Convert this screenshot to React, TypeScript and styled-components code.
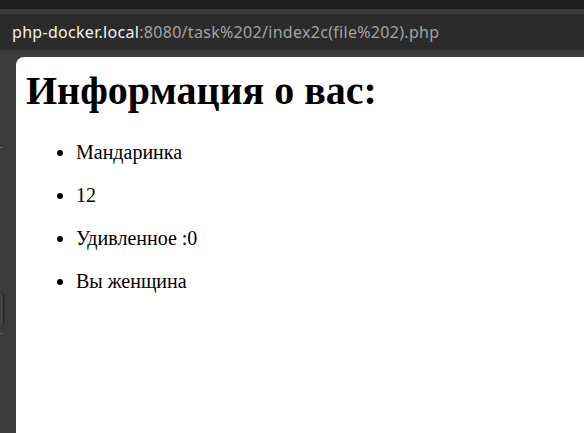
import React from 'react'
import styled, {createGlobalStyle} from 'styled-components'

const GlobalStyle = createGlobalStyle`
    html, body {
        margin: 0;
        padding: 0;
        height: 100%;
        background: #3b3b3b;
    }
    #root {
        height: 100%;
    }
`

const Frame = styled.div`
    display: flex;
    flex-direction: column;
    width: 584px;
    height: 433px;
    overflow: hidden;
    background: #3b3b3b;
`
const TitleStrip = styled.div`
    height: 9px;
    background: #1f1f1f;
`
const AddressBar = styled.div`
    height: 36px;
    margin: 5px 0 7px;
    background: #2b2b2b;
    display: flex;
    align-items: center;
    padding-left: 12px;
    font-family: "Noto Sans", "Open Sans", sans-serif;
    font-size: 16px;
    letter-spacing: 0.3px;
    white-space: nowrap;
`
const Host = styled.span`
    color: #f2f2f2;
`
const UrlPath = styled.span`
    color: #a3a3a3;
`
const Body = styled.div`
    flex: 1;
    display: flex;
    min-height: 0;
`
const Rail = styled.div`
    width: 16px;
    display: flex;
    flex-direction: column;
`
const RailMark = styled.div<{$top: number}>`
    width: 3px;
    height: 1px;
    margin-top: ${p => p.$top}px;
    background: #5c5c5c;
`
const RailTab = styled.div<{$top: number}>`
    width: 3px;
    height: 32px;
    margin-top: ${p => p.$top}px;
    background: #424242;
    border-radius: 0 4px 4px 0;
    box-shadow: 1px 0 2px rgba(0, 0, 0, 0.5);
`
const Page = styled.div`
    flex: 1;
    background: #fff;
    border-top-left-radius: 8px;
    padding: 11px 10px 10px;
    font-family: "Liberation Serif", "Times New Roman", serif;
    color: #000;
`
const Title = styled.h1`
    margin: 0 0 27px;
    font-size: 40px;
    font-weight: bold;
    line-height: 46px;
`
const InfoList = styled.ul`
    margin: 0;
    padding-left: 50px;
    list-style: disc;
`
const InfoItem = styled.li`
    font-size: 20px;
    line-height: 23px;
    margin-bottom: 20px;
`

const info = ['Мандаринка', '12', 'Удивленное :0', 'Вы женщина']

export default function App() {
    return (
        <Frame>
            <GlobalStyle/>
            <TitleStrip/>
            <AddressBar>
                <Host>php-docker.local</Host>
                <UrlPath>:8080/task%202/index2c(file%202).php</UrlPath>
            </AddressBar>
            <Body>
                <Rail>
                    <RailMark $top={90}/>
                    <RailTab $top={145}/>
                    <RailMark $top={8}/>
                </Rail>
                <Page>
                    <Title>Информация о вас:</Title>
                    <InfoList>
                        {info.map(item => (
                            <InfoItem key={item}>{item}</InfoItem>
                        ))}
                    </InfoList>
                </Page>
            </Body>
        </Frame>
    )
}
